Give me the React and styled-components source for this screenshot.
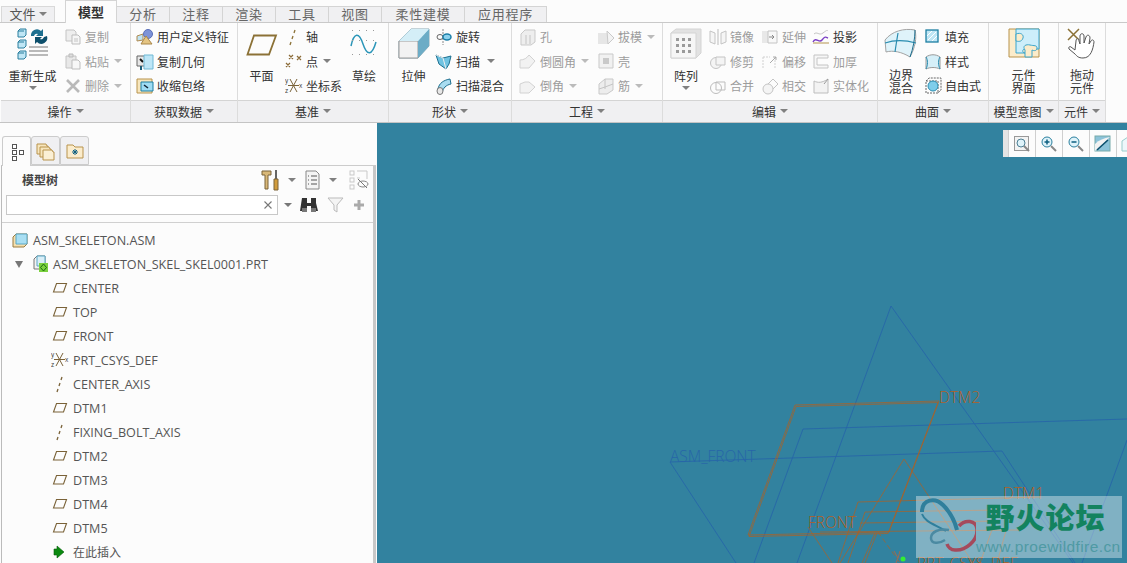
import React from 'react';
import styled, { createGlobalStyle } from 'styled-components';

const GlobalStyle = createGlobalStyle`
  html, body { margin: 0; padding: 0; background: #fcfcfc; }
  body { font-family: "Noto Sans CJK SC", "Noto Sans", sans-serif; font-size: 13px; color: #333; }
`;

const Svg = ({ size = 18, w, h, children }) => (
  <svg width={w || size} height={h || size} viewBox={`0 0 ${w || size} ${h || size}`} fill="none">
    {children}
  </svg>
);

// ribbon and tree icons
const Cube = ({ x, y, s = 6 }) => (
  <g>
    <path d={`M${x + 2} ${y}h${s}v${s}l-2 2h-${s}v-${s}z`} fill="#bfe6f5" stroke="#2a7f9e" />
    <path d={`M${x} ${y + 2}h${s}`} stroke="#2a7f9e" />
  </g>
);
const AxisShape = ({ color = '#7a6238' }) => (
  <path d="M8 2L7 5M6 8L5 11M4 14L3 17" stroke={color} strokeWidth="1.3" transform="translate(2 0)" />
);
const CsysShape = () => (
  <g stroke="#7a6238" strokeWidth="1">
    <path d="M5 15L12 2M5 2L12 15M3 8.5H14" />
    <text x="0" y="6" fontSize="6.5" fontFamily="Liberation Sans" fill="#444" stroke="none">y</text>
    <text x="0" y="16" fontSize="6.5" fontFamily="Liberation Sans" fill="#444" stroke="none">z</text>
    <text x="14" y="11" fontSize="6.5" fontFamily="Liberation Sans" fill="#444" stroke="none">x</text>
  </g>
);

const icons = {
  regen: (
    <Svg w={34} h={32}>
      <Cube x={2} y={1} s={6} />
      <Cube x={2} y={12} s={6} />
      <Cube x={2} y={23} s={6} />
      <path d="M15 8a6 6 0 0 1 10-5l2-2v7h-7l2-2a3 3 0 0 0-4 2z" fill="#1d6f8f" />
      <path d="M31 8a6 6 0 0 1-10 6l-2 2V9h7l-2 2a3 3 0 0 0 4-2z" fill="#0d4f6c" />
      <path d="M13 19h19M13 23h19M13 27h19" stroke="#a2a2a2" strokeWidth="1.5" />
    </Svg>
  ),
  copy: (
    <Svg>
      <path d="M2 2h8l2 2v9H2z" fill="#eee" stroke="#c4c4c4" />
      <path d="M8 7h6l2 2v7H8z" fill="#f6f6f6" stroke="#bdbdbd" />
      <path d="M10 11h4M10 13h4" stroke="#c4c4c4" />
    </Svg>
  ),
  paste: (
    <Svg>
      <path d="M2 4h10v12H2z" fill="#e8e8e8" stroke="#c4c4c4" />
      <path d="M5 2h4v3H5z" fill="#ddd" stroke="#bbb" />
      <path d="M8 8h6l2 2v7H8z" fill="#f7f7f7" stroke="#bdbdbd" />
    </Svg>
  ),
  del: (
    <Svg>
      <path d="M3 3l12 12M15 3L3 15" stroke="#b9b9b9" strokeWidth="2.6" />
    </Svg>
  ),
  udf: (
    <Svg>
      <path d="M1 8l6-2v6l-6 1z" fill="#bfe3f2" stroke="#b08a4e" />
      <circle cx="12" cy="6" r="4.5" fill="#7d93d8" stroke="#5a6fb8" />
      <path d="M10 8l-5 8h11z" fill="#e5c583" stroke="#a98649" />
    </Svg>
  ),
  copygeom: (
    <Svg>
      <path d="M1 4h9v10H1z" fill="#e7e7e7" stroke="#666" />
      <path d="M4 7l3 3" stroke="#111" strokeWidth="2" />
      <path d="M8 3h9v14H8z" fill="#bde6f7" stroke="#6fb8d4" />
      <path d="M4 14h2v4H4z" fill="#1d5f7a" />
    </Svg>
  ),
  shrink: (
    <Svg>
      <path d="M1 2h15v14H1z" fill="#f7e6bd" stroke="#b8934d" />
      <path d="M5 5h12v9H5z" fill="#9fdcf3" stroke="#1d7fa2" />
      <path d="M8 8l4 3" stroke="#123" strokeWidth="1.5" />
    </Svg>
  ),
  plane: (
    <Svg w={32} h={30}>
      <path d="M8 7.5H30L23 26.5H1.5z" stroke="#8b7136" strokeWidth="1.8" />
    </Svg>
  ),
  point: (
    <Svg>
      <g stroke="#8b6b38" strokeWidth="1.2">
        <path d="M4 3l4 4M8 3L4 7M12 4l4 4M16 4l-4 4M1 11l4 4M5 11l-4 4" />
      </g>
    </Svg>
  ),
  sketch: (
    <Svg w={30} h={30}>
      <path d="M2 18c3-14 8-14 12-2s9 12 13-2" stroke="#2a95b8" strokeWidth="1.5" />
      <g fill="#999">
        {[3, 10, 17, 24].map((x) => [2, 12, 26].map((y) => <rect key={`${x}${y}`} x={x} y={y} width="1" height="1" />))}
      </g>
    </Svg>
  ),
  extrude: (
    <Svg w={32} h={32}>
      <path d="M1 13L13 1h18v17L20 30H1z" fill="#a8d6e6" stroke="#8ba9b5" />
      <path d="M1 13h19v17H1z" fill="#f2f2f2" stroke="#9a9a9a" />
      <path d="M20 13L31 1v17L20 30z" fill="#6cacc6" />
      <path d="M1 13L13 1h18L20 13z" fill="#d4eef7" />
    </Svg>
  ),
  revolve: (
    <Svg>
      <path d="M8 1v16" stroke="#888" strokeDasharray="2 1" />
      <ellipse cx="5" cy="9" rx="3" ry="2.5" stroke="#666" />
      <ellipse cx="12" cy="9" rx="4" ry="3" fill="#8cd2ee" stroke="#1c7fa8" strokeWidth="1.5" />
    </Svg>
  ),
  sweep: (
    <Svg>
      <path d="M1 3l7 3 8-2-2 8-3 5-7-5z" fill="#6fc3e2" stroke="#1d6f8f" />
      <path d="M1 3l7 3 3 11" stroke="#eee" />
    </Svg>
  ),
  sweepblend: (
    <Svg>
      <path d="M3 12c1-6 6-9 12-10l1 5c-5 1-8 4-9 9z" fill="#a9dcf0" stroke="#1d6f8f" />
      <ellipse cx="5" cy="14" rx="3" ry="3.5" fill="#e7e7e7" stroke="#777" />
    </Svg>
  ),
  hole: (
    <Svg>
      <path d="M2 6l4-4h10v12l-4 3H2z" fill="#eee" stroke="#c9c9c9" />
      <path d="M7 7v9M11 7v9" stroke="#c4c4c4" />
    </Svg>
  ),
  draft: (
    <Svg>
      <path d="M1 5h9l7 5-6 6H1z" fill="#e6e6e6" />
      <path d="M10 3l7 7-6 6z" fill="#f3f3f3" stroke="#c9c9c9" />
    </Svg>
  ),
  round: (
    <Svg>
      <path d="M1 8c4 0 7-2 9-5l6 6-6 7H1z" fill="#f2f2f2" stroke="#d2d2d2" />
    </Svg>
  ),
  shell: (
    <Svg>
      <path d="M2 2h14v14H2z" fill="#f1f1f1" stroke="#c9c9c9" />
      <path d="M6 6h6v6H6z" fill="#c9c9c9" />
    </Svg>
  ),
  chamfer: (
    <Svg>
      <path d="M1 7l5-2h4l6 5-6 6H1z" fill="#f2f2f2" stroke="#d2d2d2" />
    </Svg>
  ),
  rib: (
    <Svg>
      <path d="M2 7l6-5h8v11l-6 4H2z" fill="#ededed" stroke="#c9c9c9" />
      <path d="M8 2v10M2 12l6-2 8-3" stroke="#c4c4c4" />
    </Svg>
  ),
  pattern: (
    <Svg w={32} h={32}>
      <path d="M1 5l5-4h25v24l-5 5H1z" fill="#e2e2e2" stroke="#d4d4d4" />
      <path d="M1 5h25v25H1z" fill="#f6f6f6" stroke="#d4d4d4" />
      <g fill="#9a9a9a">
        {[6, 12, 18].map((x) => [10, 16, 22].map((y) => <rect key={`${x}${y}`} x={x} y={y} width="3" height="3" />))}
      </g>
    </Svg>
  ),
  mirror: (
    <Svg>
      <path d="M1 3l5 2v11l-5-2zM17 3l-5 2v11l5-2z" stroke="#c4c4c4" fill="#f5f5f5" />
      <path d="M9 1v16" stroke="#bbb" />
    </Svg>
  ),
  trim: (
    <Svg>
      <circle cx="7" cy="11" r="5.5" fill="#f4f4f4" stroke="#c4c4c4" />
      <path d="M7 5h9v8H7z" fill="#f4f4f4" stroke="#c4c4c4" />
    </Svg>
  ),
  merge: (
    <Svg>
      <circle cx="7" cy="11" r="5.5" stroke="#bdbdbd" />
      <path d="M7 5h9v8H7v-8" stroke="#bdbdbd" />
    </Svg>
  ),
  extend: (
    <Svg>
      <path d="M1 3h6v12H1z" fill="#e8e8e8" />
      <path d="M7 3h9v12H7z" fill="#f8f8f8" stroke="#c4c4c4" />
      <path d="M8 9h5M11 7l2 2-2 2" stroke="#888" />
    </Svg>
  ),
  offset: (
    <Svg>
      <path d="M2 5h7M2 5v12M14 5v12" stroke="#d0d0d0" strokeDasharray="2 1" />
      <path d="M9 11l6-6M12 5h3v3" stroke="#aaa" />
    </Svg>
  ),
  intersect: (
    <Svg>
      <circle cx="7" cy="12" r="5" fill="#f4f4f4" stroke="#c4c4c4" />
      <path d="M7 7l5-5 5 5-5 5" stroke="#c4c4c4" />
    </Svg>
  ),
  project: (
    <Svg>
      <path d="M2 6c3-3 5 2 9-1s4-3 5-2" stroke="#c4c4c4" />
      <path d="M1 14c3-6 6 2 9-2s4-3 6-2" stroke="#7b3fc4" strokeWidth="1.4" />
      <path d="M1 15h16" stroke="#b5944f" />
    </Svg>
  ),
  thicken: (
    <Svg>
      <path d="M2 3h14v3H5v7h11v3H2z" stroke="#c4c4c4" fill="#f7f7f7" />
    </Svg>
  ),
  solidify: (
    <Svg>
      <path d="M2 4c4 2 8 2 14-2v14H2z" fill="#f3f3f3" stroke="#bdbdbd" />
      <path d="M16 2l-4 5" stroke="#999" />
    </Svg>
  ),
  boundary: (
    <Svg w={34} h={32}>
      <path d="M1 12C8 3 20 0 31 2c2 8 0 18-5 27C18 24 9 22 2 24z" fill="#dff3fa" stroke="#a3a3a3" />
      <path d="M14 5c-1 6-2 12-3 19M1 15c9-3 20-3 31 0" stroke="#2a8db0" strokeWidth="1.2" />
      <path d="M26 29c3-8 5-18 5-27" stroke="#1d6f8f" />
    </Svg>
  ),
  fill: (
    <Svg size={16}>
      <rect x="2" y="2" width="12" height="12" fill="#bfe6f5" stroke="#1d7fa2" strokeWidth="1.3" />
      <path d="M4 12l8-8M3 8l5-5M8 13l5-5" stroke="#fff" />
    </Svg>
  ),
  style: (
    <Svg>
      <path d="M2 5c4-3 10-3 14 0v12c-4-2-10-2-14 0z" fill="#d5eff8" stroke="#9a9a9a" />
      <path d="M2 5c2 3 2 8 0 12M16 5c-2 3-2 8 0 12" stroke="#2a8db0" />
    </Svg>
  ),
  freestyle: (
    <Svg>
      <path d="M2 4h12v12H2zM2 4l3-3h12v12l-3 3" stroke="#666" strokeDasharray="2 1" />
      <circle cx="9" cy="9" r="5" fill="#7fcdea" stroke="#2a8db0" />
    </Svg>
  ),
  component: (
    <Svg w={32} h={30}>
      <path d="M1 1h30v28H1z" fill="#fbeccb" stroke="#b8934d" />
      <path d="M8 1h23v20H20c2-3-3-3-2 0h-1c-3 0-3 4 0 4H8z" fill="#cdeefa" stroke="#3aa5cc" />
      <path d="M8 6c5-2 8 1 7 4s-3 4-7 3z" fill="#fbeccb" stroke="#3aa5cc" />
      <path d="M17 22c-3-4 1-6 5-5s7 0 7 3-3 3-5 2v7h-7z" fill="#fbeccb" stroke="#3aa5cc" />
    </Svg>
  ),
  drag: (
    <Svg w={30} h={32}>
      <path d="M1 1l11 11M12 1L1 12" stroke="#8b7136" strokeWidth="1.5" />
      <path d="M4 19l4 3 1-9c0-3 3-3 3 0l1 3 0-8c0-3 4-3 4 0v7l2-6c1-3 4-2 4 1l-1 6 2-3c1-2 3-1 3 1-1 7-3 16-11 16-5 0-6-2-8-4l-6-5c-1-2 1-3 2-2z" fill="#fff" stroke="#555" />
    </Svg>
  ),
};

const treeIcons = {
  plane: (
    <Svg w={16} h={14}>
      <path d="M4.5 2.5H14.5L11.5 11H1.5z" stroke="#7a6238" strokeWidth="1.1" />
    </Svg>
  ),
  axis: (
    <Svg w={16} h={18}>
      <AxisShape />
    </Svg>
  ),
  csys: (
    <Svg w={18} h={18}>
      <CsysShape />
    </Svg>
  ),
  insert: (
    <Svg w={16} h={14}>
      <path d="M5 1l7 6-7 6v-3H2V4h3z" fill="#0b8a10" stroke="#075c0a" strokeWidth=".6" />
    </Svg>
  ),
};

const Page = styled.div`
  width: 1127px;
  height: 563px;
  overflow: hidden;
  display: flex;
  flex-direction: column;
`;

const TabBar = styled.div`
  height: 23px;
  display: flex;
  align-items: flex-end;
  padding-left: 1px;
  background: #fcfcfc;
  border-bottom: 1px solid #c9c9c9;
  box-sizing: border-box;
`;

const FileTab = styled.div`
  width: 54px;
  height: 16px;
  box-sizing: border-box;
  margin-right: 10px;
  padding-bottom: 2px;
  line-height: 1;
  background: #f0f0f2;
  border: 1px solid #d9d9d9;
  border-bottom: 0;
  display: flex;
  align-items: center;
  justify-content: center;
  gap: 3px;
  font-size: 13px;
  color: #555;
`;

const Tab = styled.div`
  width: ${(p) => p.$w || 53}px;
  height: ${(p) => (p.$active ? 23 : 16)}px;
  box-sizing: border-box;
  margin-bottom: ${(p) => (p.$active ? -1 : 0)}px;
  padding-bottom: 2px;
  line-height: 1;
  background: ${(p) => (p.$active ? '#fcfcfc' : '#f0f0f2')};
  border: 1px solid #d4d4d4;
  border-left-width: ${(p) => (p.$active ? 1 : 0)}px;
  border-bottom: 0;
  display: flex;
  align-items: center;
  justify-content: center;
  font-size: 13px;
  font-weight: ${(p) => (p.$active ? 700 : 400)};
  letter-spacing: ${(p) => (p.$active ? 0 : 0.8)}px;
  color: ${(p) => (p.$active ? '#333' : '#666')};
`;

const Ribbon = styled.div`
  display: flex;
  height: 100px;
  box-sizing: border-box;
  background: #fcfcfc;
  border-bottom: 1px solid #c4c4c4;
  padding-left: 1px;
`;

const Group = styled.div`
  width: ${(p) => p.$w}px;
  display: flex;
  flex-direction: column;
  flex: none;
  border-right: 1px solid #dcdcdc;
  box-sizing: content-box;
`;

const GroupBody = styled.div`
  flex: 1;
  display: flex;
  padding-left: ${(p) => p.$pad || 0}px;
`;

const GroupFooter = styled.div`
  height: 22px;
  box-sizing: border-box;
  padding-bottom: 1px;
  background: #f0f0f2;
  border-top: 1px solid #d4d4d4;
  display: flex;
  align-items: center;
  justify-content: center;
  gap: 4px;
  font-size: 12px;
  color: #333;
`;

const Caret = styled.span`
  width: 0;
  height: 0;
  flex: none;
  border-left: 4px solid transparent;
  border-right: 4px solid transparent;
  border-top: 4px solid ${(p) => p.$color || '#808080'};
  margin-left: ${(p) => p.$gap || 0}px;
`;

const BigCaret = styled(Caret)`
  margin-top: 4px;
`;

const BigButton = styled.div`
  width: ${(p) => p.$w}px;
  flex: none;
  display: flex;
  flex-direction: column;
  align-items: center;
`;

const BigIcon = styled.div`
  height: 37px;
  margin-top: 5px;
  display: flex;
  align-items: flex-start;
  justify-content: center;
`;

const BigLabel = styled.div`
  font-size: 12px;
  line-height: ${(p) => (p.$two ? 13 : 12)}px;
  text-align: center;
  margin-top: ${(p) => (p.$two ? 3 : 5)}px;
  white-space: pre-line;
  color: #333;
`;

const SmallCol = styled.div`
  display: flex;
  flex-direction: column;
  width: ${(p) => p.$w}px;
  flex: none;
  padding-top: 1.5px;
  box-sizing: border-box;
`;

const ToolRow = styled.div`
  height: 24.5px;
  display: flex;
  align-items: center;
  gap: 3px;
  font-size: 12px;
  white-space: nowrap;
  color: ${(p) => (p.$off ? '#9c9c9c' : '#333')};
`;

const ToolIcon = styled.span`
  display: flex;
  width: 18px;
  height: 18px;
  flex: none;
`;

const Tool = ({ icon, label, off, caret }) => (
  <ToolRow $off={off}>
    <ToolIcon>{icons[icon]}</ToolIcon>
    {label}
    {caret ? <Caret $gap={caret} $color={off ? '#bbb' : '#808080'} /> : null}
  </ToolRow>
);

const Big = ({ w, icon, label, caret }) => (
  <BigButton $w={w}>
    <BigIcon>{icons[icon]}</BigIcon>
    <BigLabel $two={label.includes('\n')}>{label}</BigLabel>
    {caret ? <BigCaret /> : null}
  </BigButton>
);

const Foot = ({ children }) => (
  <GroupFooter>
    {children}
    <Caret />
  </GroupFooter>
);

const Main = styled.div`
  flex: 1;
  display: flex;
  min-height: 0;
`;

const Side = styled.div`
  width: 377px;
  flex: none;
  box-sizing: border-box;
  background: #fcfcfc;
  padding: 13px 1px 0 1px;
  display: flex;
  flex-direction: column;
`;

const SideTabs = styled.div`
  display: flex;
  height: 29px;
  padding-left: 1px;
`;

const SideTab = styled.div`
  width: 29px;
  height: ${(p) => (p.$active ? 30 : 29)}px;
  box-sizing: border-box;
  display: flex;
  align-items: center;
  justify-content: center;
  background: ${(p) => (p.$active ? '#fcfcfc' : '#f0f0f2')};
  border: 1px solid #ccc;
  border-bottom: ${(p) => (p.$active ? 0 : '1px solid #ccc')};
  border-radius: 3px 3px 0 0;
  position: relative;
  z-index: ${(p) => (p.$active ? 1 : 0)};
`;

const TreePanel = styled.div`
  flex: 1;
  border-top: 1px solid #ccc;
  border-left: 1px solid #bbb;
  border-right: 3px solid #c8c8c8;
`;

const TreeHead = styled.div`
  display: flex;
  align-items: center;
  height: 27px;
  padding-left: 20px;
`;

const TreeTitle = styled.div`
  flex: 1;
  font-size: 12px;
  font-weight: 700;
  color: #444;
`;

const HeadTools = styled.div`
  display: flex;
  align-items: center;
  padding-right: 3px;
`;

const Spacer = styled.span`
  width: ${(p) => p.$w}px;
  flex: none;
`;

const SearchRow = styled.div`
  display: flex;
  align-items: center;
  height: 22px;
  margin-top: 1px;
  padding: 0 5px 0 4px;
`;

const SearchBox = styled.div`
  width: 272px;
  height: 20px;
  box-sizing: border-box;
  background: #fff;
  border: 1px solid #c8c8c8;
  display: flex;
  align-items: center;
  justify-content: flex-end;
  padding-right: 4px;
  margin-right: 6px;
`;

const TreeList = styled.div`
  margin-top: 6px;
  border-top: 1px solid #d0d0d0;
  padding-top: 5px;
`;

const TreeRow = styled.div`
  height: 24px;
  display: flex;
  align-items: center;
  padding-left: ${(p) => p.$indent}px;
  font-family: "Open Sans", "Noto Sans CJK SC", sans-serif;
  font-size: 12.6px;
  color: #555;
  white-space: nowrap;
`;

const CjkLabel = styled.span`
  font-size: 12px;
`;

const RowIcon = styled.span`
  width: 18px;
  display: flex;
  align-items: center;
  justify-content: center;
  margin-right: ${(p) => (p.$tight ? 3 : 4)}px;
  flex: none;
`;

const ExpandMark = styled.span`
  width: 0;
  height: 0;
  border-left: 4px solid transparent;
  border-right: 4px solid transparent;
  border-top: 7px solid #777;
  margin-right: 9px;
`;

const ViewPort = styled.div`
  flex: 1;
  position: relative;
  background: #32829f;
  overflow: hidden;
`;

const Canvas = styled.svg`
  position: absolute;
  left: 0;
  top: 0;
`;

const ViewTools = styled.div`
  position: absolute;
  top: 7px;
  right: 0;
  left: 626px;
  height: 27px;
  display: flex;
  background: #f5f5f5;
  border-left: 5px solid #e4e4e4;
`;

const ViewTool = styled.div`
  width: 26px;
  flex: none;
  display: flex;
  align-items: center;
  justify-content: center;
  background: #fcfcfc;
  border-left: 1px solid #cfcfcf;
`;

const Watermark = styled.div`
  position: absolute;
  left: 539px;
  top: 373px;
  width: 206px;
  height: 62px;
  background: rgba(255, 255, 255, 0.38);
  display: flex;
`;

const Butterfly = styled.div`
  width: 60px;
  flex: none;
  padding-left: 3px;
  box-sizing: border-box;
`;

const MarkText = styled.div`
  flex: 1;
  display: flex;
  flex-direction: column;
  align-items: flex-end;
  padding-right: 4px;
`;

const MarkTitle = styled.div`
  font-size: 29px;
  line-height: 30px;
  margin-top: 5px;
  margin-right: 17px;
  letter-spacing: 1px;
  font-weight: 900;
  white-space: nowrap;
  color: #13835f;
`;

const MarkUrl = styled.div`
  font-family: "Liberation Sans", sans-serif;
  font-size: 15.5px;
  line-height: 16px;
  margin-top: 8px;
  margin-right: 2px;
  letter-spacing: 0.4px;
  white-space: nowrap;
  color: #4f9aa4;
`;

const GeomLabel = ({ x, y, color, children }) => (
  <text x={x} y={y} fill={color} fontSize={15.5} fontWeight={300} fontFamily="'Open Sans', sans-serif">
    {children}
  </text>
);

const tabs = [
  ['分析'], ['注释'], ['渲染'], ['工具'], ['视图'], ['柔性建模', 83], ['应用程序', 82],
];

const treeItems = [
  ['plane', 'CENTER'],
  ['plane', 'TOP'],
  ['plane', 'FRONT'],
  ['csys', 'PRT_CSYS_DEF'],
  ['axis', 'CENTER_AXIS'],
  ['plane', 'DTM1'],
  ['axis', 'FIXING_BOLT_AXIS'],
  ['plane', 'DTM2'],
  ['plane', 'DTM3'],
  ['plane', 'DTM4'],
  ['plane', 'DTM5'],
];

const Ribbons = () => (
  <Ribbon>
    <Group $w={129}>
      <GroupBody>
        <Big w={63} icon="regen" label="重新生成" caret />
        <SmallCol $w={66}>
          <Tool icon="copy" label="复制" off />
          <Tool icon="paste" label="粘贴" off caret={2} />
          <Tool icon="del" label="删除" off caret={2} />
        </SmallCol>
      </GroupBody>
      <Foot>操作</Foot>
    </Group>
    <Group $w={106}>
      <GroupBody $pad={5}>
        <SmallCol $w={100}>
          <Tool icon="udf" label="用户定义特征" />
          <Tool icon="copygeom" label="复制几何" />
          <Tool icon="shrink" label="收缩包络" />
        </SmallCol>
      </GroupBody>
      <Foot>获取数据</Foot>
    </Group>
    <Group $w={150}>
      <GroupBody>
        <Big w={47} icon="plane" label="平面" />
        <SmallCol $w={60}>
          <ToolRow>
            <ToolIcon>
              <Svg><AxisShape color="#8b7136" /></Svg>
            </ToolIcon>
            轴
          </ToolRow>
          <Tool icon="point" label="点" caret={2} />
          <ToolRow>
            <ToolIcon>
              <Svg><CsysShape /></Svg>
            </ToolIcon>
            坐标系
          </ToolRow>
        </SmallCol>
        <Big w={38} icon="sketch" label="草绘" />
      </GroupBody>
      <Foot>基准</Foot>
    </Group>
    <Group $w={122}>
      <GroupBody $pad={3}>
        <Big w={43} icon="extrude" label="拉伸" />
        <SmallCol $w={76}>
          <Tool icon="revolve" label="旋转" />
          <Tool icon="sweep" label="扫描" caret={4} />
          <Tool icon="sweepblend" label="扫描混合" />
        </SmallCol>
      </GroupBody>
      <Foot>形状</Foot>
    </Group>
    <Group $w={150}>
      <GroupBody $pad={7}>
        <SmallCol $w={78}>
          <Tool icon="hole" label="孔" off />
          <Tool icon="round" label="倒圆角" off caret={2} />
          <Tool icon="chamfer" label="倒角" off caret={2} />
        </SmallCol>
        <SmallCol $w={65}>
          <Tool icon="draft" label="拔模" off caret={2} />
          <Tool icon="shell" label="壳" off />
          <Tool icon="rib" label="筋" off caret={2} />
        </SmallCol>
      </GroupBody>
      <Foot>工程</Foot>
    </Group>
    <Group $w={214}>
      <GroupBody>
        <Big w={46} icon="pattern" label="阵列" caret />
        <SmallCol $w={52}>
          <Tool icon="mirror" label="镜像" off />
          <Tool icon="trim" label="修剪" off />
          <Tool icon="merge" label="合并" off />
        </SmallCol>
        <SmallCol $w={51}>
          <Tool icon="extend" label="延伸" off />
          <Tool icon="offset" label="偏移" off />
          <Tool icon="intersect" label="相交" off />
        </SmallCol>
        <SmallCol $w={60}>
          <Tool icon="project" label="投影" />
          <Tool icon="thicken" label="加厚" off />
          <Tool icon="solidify" label="实体化" off />
        </SmallCol>
      </GroupBody>
      <Foot>编辑</Foot>
    </Group>
    <Group $w={110}>
      <GroupBody>
        <Big w={46} icon="boundary" label={'边界\n混合'} />
        <SmallCol $w={60}>
          <Tool icon="fill" label="填充" />
          <Tool icon="style" label="样式" />
          <Tool icon="freestyle" label="自由式" />
        </SmallCol>
      </GroupBody>
      <Foot>曲面</Foot>
    </Group>
    <Group $w={69}>
      <GroupBody>
        <Big w={69} icon="component" label={'元件\n界面'} />
      </GroupBody>
      <Foot>模型意图</Foot>
    </Group>
    <Group $w={46}>
      <GroupBody>
        <Big w={46} icon="drag" label={'拖动\n元件'} />
      </GroupBody>
      <Foot>元件</Foot>
    </Group>
  </Ribbon>
);

const Viewport = () => (
  <ViewPort>
    <Canvas width="750" height="440" viewBox="377 123 750 440">
      <g stroke="#2766a8" strokeWidth="0.9" fill="none">
        <path d="M797 563L891 306L1073 563" />
        <path d="M736 563L670 462L1002 451L1075 563" />
        <path d="M754 563L803 429L1127 419" />
        <path d="M1127 440L1082 563" />
      </g>
      <GeomLabel x={670} y={462} color="#2766a8">ASM_FRONT</GeomLabel>
      <g stroke="#b2601f" strokeWidth="0.7" fill="none">
        <path d="M795 405L939 401L889 532L748 535z" />
        <path d="M796 406.5L938 402.5L888 533.5L749 536.5z" />
        <path d="M840 563L904 459L973 563" />
        <path d="M808 527L832 563" />
        <path d="M858 502L1040 497M858 502L838 563" />
        <path d="M865 512L1000 510M865 512L848 563" />
        <path d="M860 523L1000 521" />
        <path d="M820 532L1020 530" />
        <path d="M877 533L865 563M875 533L862 563" />
        <path d="M878 532L900 563" strokeDasharray="5 3" />
        <path d="M993 527L980 563M1007 527L997 563" />
      </g>
      <GeomLabel x={939} y={403} color="#b2601f">DTM2</GeomLabel>
      <GeomLabel x={1003} y={499} color="#b2601f">DTM1</GeomLabel>
      <GeomLabel x={808} y={528} color="#b2601f">FRONT</GeomLabel>
      <GeomLabel x={917} y={569} color="#b2601f">PRT_CSYS_DEF</GeomLabel>
      <path d="M894 551L898 558L900 551M898 558L896 563" stroke="#a06a50" fill="none" />
      <circle cx="903" cy="559" r="2.5" fill="#33ee33" />
    </Canvas>
    <ViewTools>
      <ViewTool>
        <Svg>
          <rect x="1.5" y="1.5" width="14" height="14" fill="#f3f3f3" stroke="#999" />
          <circle cx="8" cy="8" r="4" fill="#dff3fa" stroke="#4d7f94" />
          <path d="M11 11l5 5" stroke="#888" strokeWidth="2" />
        </Svg>
      </ViewTool>
      <ViewTool>
        <Svg>
          <circle cx="7" cy="7" r="5" fill="#dff3fa" stroke="#2a7f9e" />
          <path d="M4.5 7h5M7 4.5v5" stroke="#0d5f80" strokeWidth="1.5" />
          <path d="M11 11l5 5" stroke="#888" strokeWidth="2" />
        </Svg>
      </ViewTool>
      <ViewTool>
        <Svg>
          <circle cx="7" cy="7" r="5" fill="#dff3fa" stroke="#2a7f9e" />
          <path d="M4.5 7h5" stroke="#0d5f80" strokeWidth="1.5" />
          <path d="M11 11l5 5" stroke="#888" strokeWidth="2" />
        </Svg>
      </ViewTool>
      <ViewTool>
        <Svg>
          <rect x="1" y="1" width="15" height="15" fill="#8cc3d9" stroke="#7aa" />
          <path d="M1 16V9c4-4 9-6 15-7z" fill="#f2f2f2" />
          <path d="M3 15L14 5" stroke="#0d4f6c" strokeWidth="1.5" />
        </Svg>
      </ViewTool>
      <ViewTool>
        <Svg>
          <path d="M1 6l6-4h11v14H1z" fill="#eef7fb" stroke="#9cc" />
        </Svg>
      </ViewTool>
    </ViewTools>
    <Watermark>
      <Butterfly>
        <svg width="57" height="62" viewBox="0 0 57 62" fill="none">
          <path d="M3 16C3 3 16 1 24 9c8 8 12 17 14 25" stroke="#2f7f9c" strokeWidth="4" />
          <path d="M3 18c3 8 12 10 24 17" stroke="#2f7f9c" strokeWidth="2" />
          <path d="M40 30c6-7 17-6 18 3 1 12-12 22-22 21-4 0-7-3-8-6" stroke="#a54a5c" strokeWidth="3.5" />
          <path d="M30 34c-10-2-18 2-18 8s8 6 14 2" stroke="#4b8aa2" strokeWidth="2.5" />
        </svg>
      </Butterfly>
      <MarkText>
        <MarkTitle>野火论坛</MarkTitle>
        <MarkUrl>www.proewildfire.cn</MarkUrl>
      </MarkText>
    </Watermark>
  </ViewPort>
);

export default function App() {
  return (
    <Page>
      <GlobalStyle />
      <TabBar>
        <FileTab>
          文件
          <Caret />
        </FileTab>
        <Tab $active $w={52}>模型</Tab>
        {tabs.map(([name, w]) => (
          <Tab key={name} $w={w}>{name}</Tab>
        ))}
      </TabBar>
      <Ribbons />
      <Main>
        <Side>
          <SideTabs>
            <SideTab $active>
              <Svg>
                <g stroke="#555" fill="#fff">
                  <rect x="4.5" y="1.5" width="4" height="4" />
                  <rect x="4.5" y="7.5" width="4" height="4" />
                  <rect x="4.5" y="13.5" width="4" height="4" />
                  <rect x="11.5" y="7.5" width="4" height="4" />
                </g>
              </Svg>
            </SideTab>
            <SideTab>
              <Svg w={20} h={20}>
                <path d="M1 3h9l1 2h1v8H1z" fill="#f7e6bd" stroke="#b8934d" />
                <path d="M4 6h9l1 2h1v8H4z" fill="#f7e6bd" stroke="#b8934d" />
                <path d="M7 9h9l1 2h1v8H7z" fill="#fbf0d5" stroke="#b8934d" />
              </Svg>
            </SideTab>
            <SideTab>
              <Svg w={18} h={16}>
                <path d="M1 2h6l2 2h8v11H1z" fill="#fbeccb" stroke="#b8934d" />
                <path d="M9 6v6M6 9h6M7 7l4 4M11 7l-4 4" stroke="#0d5f80" />
              </Svg>
            </SideTab>
          </SideTabs>
          <TreePanel>
            <TreeHead>
              <TreeTitle>模型树</TreeTitle>
              <HeadTools>
                <Svg w={20} h={22}>
                  <path d="M1 2h9v4H7v14H4V6H1z" fill="#d9b878" stroke="#7a6238" />
                  <path d="M14 1h2v9h-2z" fill="#666" />
                  <path d="M13 10h4v11h-4z" fill="#d19c3c" stroke="#7a6238" />
                </Svg>
                <Caret $gap={7} />
                <Spacer $w={5} />
                <Svg w={22} h={20}>
                  <path d="M5 1h10l3 3v15H5z" fill="#f4f4f4" stroke="#888" />
                  <path d="M7 6h1M10 6h6M7 10h1M10 10h6M7 14h1M10 14h6" stroke="#555" />
                </Svg>
                <Caret $gap={6} />
                <Spacer $w={9} />
                <Svg w={24} h={20}>
                  <g stroke="#c9c9c9">
                    <rect x="4" y="1" width="4" height="4" />
                    <rect x="4" y="8" width="4" height="4" />
                    <rect x="4" y="15" width="4" height="4" />
                    <path d="M11 1h10v8M11 8h3" />
                  </g>
                  <ellipse cx="17" cy="14" rx="5" ry="3" stroke="#888" />
                  <path d="M12 9l9 9" stroke="#777" />
                </Svg>
              </HeadTools>
            </TreeHead>
            <SearchRow>
              <SearchBox>
                <Svg size={10}>
                  <path d="M1.5 1.5l7 7M8.5 1.5l-7 7" stroke="#777" strokeWidth="1.1" />
                </Svg>
              </SearchBox>
              <Caret $color="#777" />
              <Spacer $w={7} />
              <Svg w={20} h={18}>
                <path d="M3 2h5v5h4V2h5v5l2 8h-7V10H8v5H1z" fill="#333" />
                <path d="M3 12h5v4H3zM12 12h5v4h-5z" fill="#777" />
              </Svg>
              <Spacer $w={8} />
              <Svg w={18} h={18}>
                <path d="M1 2h15l-6 7v7l-3-2V9z" fill="#f4f4f4" stroke="#bbb" />
              </Svg>
              <Spacer $w={7} />
              <Svg w={14} h={14}>
                <path d="M5.5 2h3v3.5H12v3H8.5V12h-3V8.5H2v-3h3.5z" fill="#aaa" />
              </Svg>
            </SearchRow>
            <TreeList>
              <TreeRow $indent={9}>
                <RowIcon>
                  <Svg w={16} h={16}>
                    <path d="M1 5l3-3h11v10l-3 3H1z" fill="#f4dfae" stroke="#9a7b3f" />
                    <path d="M4 2h11v10H4z" fill="#a9dff3" stroke="#5ba8c6" />
                  </Svg>
                </RowIcon>
                ASM_SKELETON.ASM
              </TreeRow>
              <TreeRow $indent={13}>
                <ExpandMark />
                <RowIcon $tight>
                  <Svg w={18} h={18}>
                    <path d="M2 4l3-3h8v10l-3 3H2z" fill="#f2f2f2" stroke="#777" />
                    <path d="M5 1h8v10H5z" fill="#d9eef7" stroke="#5ba8c6" />
                    <rect x="7" y="8" width="9" height="9" fill="#7bd13e" />
                    <path d="M11.5 9l3 3.5-3 3.5-3-3.5z" stroke="#1a6b12" />
                  </Svg>
                </RowIcon>
                ASM_SKELETON_SKEL_SKEL0001.PRT
              </TreeRow>
              {treeItems.map(([kind, name]) => (
                <TreeRow key={name} $indent={49}>
                  <RowIcon>{treeIcons[kind]}</RowIcon>
                  {name}
                </TreeRow>
              ))}
              <TreeRow $indent={49}>
                <RowIcon>{treeIcons.insert}</RowIcon>
                <CjkLabel>在此插入</CjkLabel>
              </TreeRow>
            </TreeList>
          </TreePanel>
        </Side>
        <Viewport />
      </Main>
    </Page>
  );
}
